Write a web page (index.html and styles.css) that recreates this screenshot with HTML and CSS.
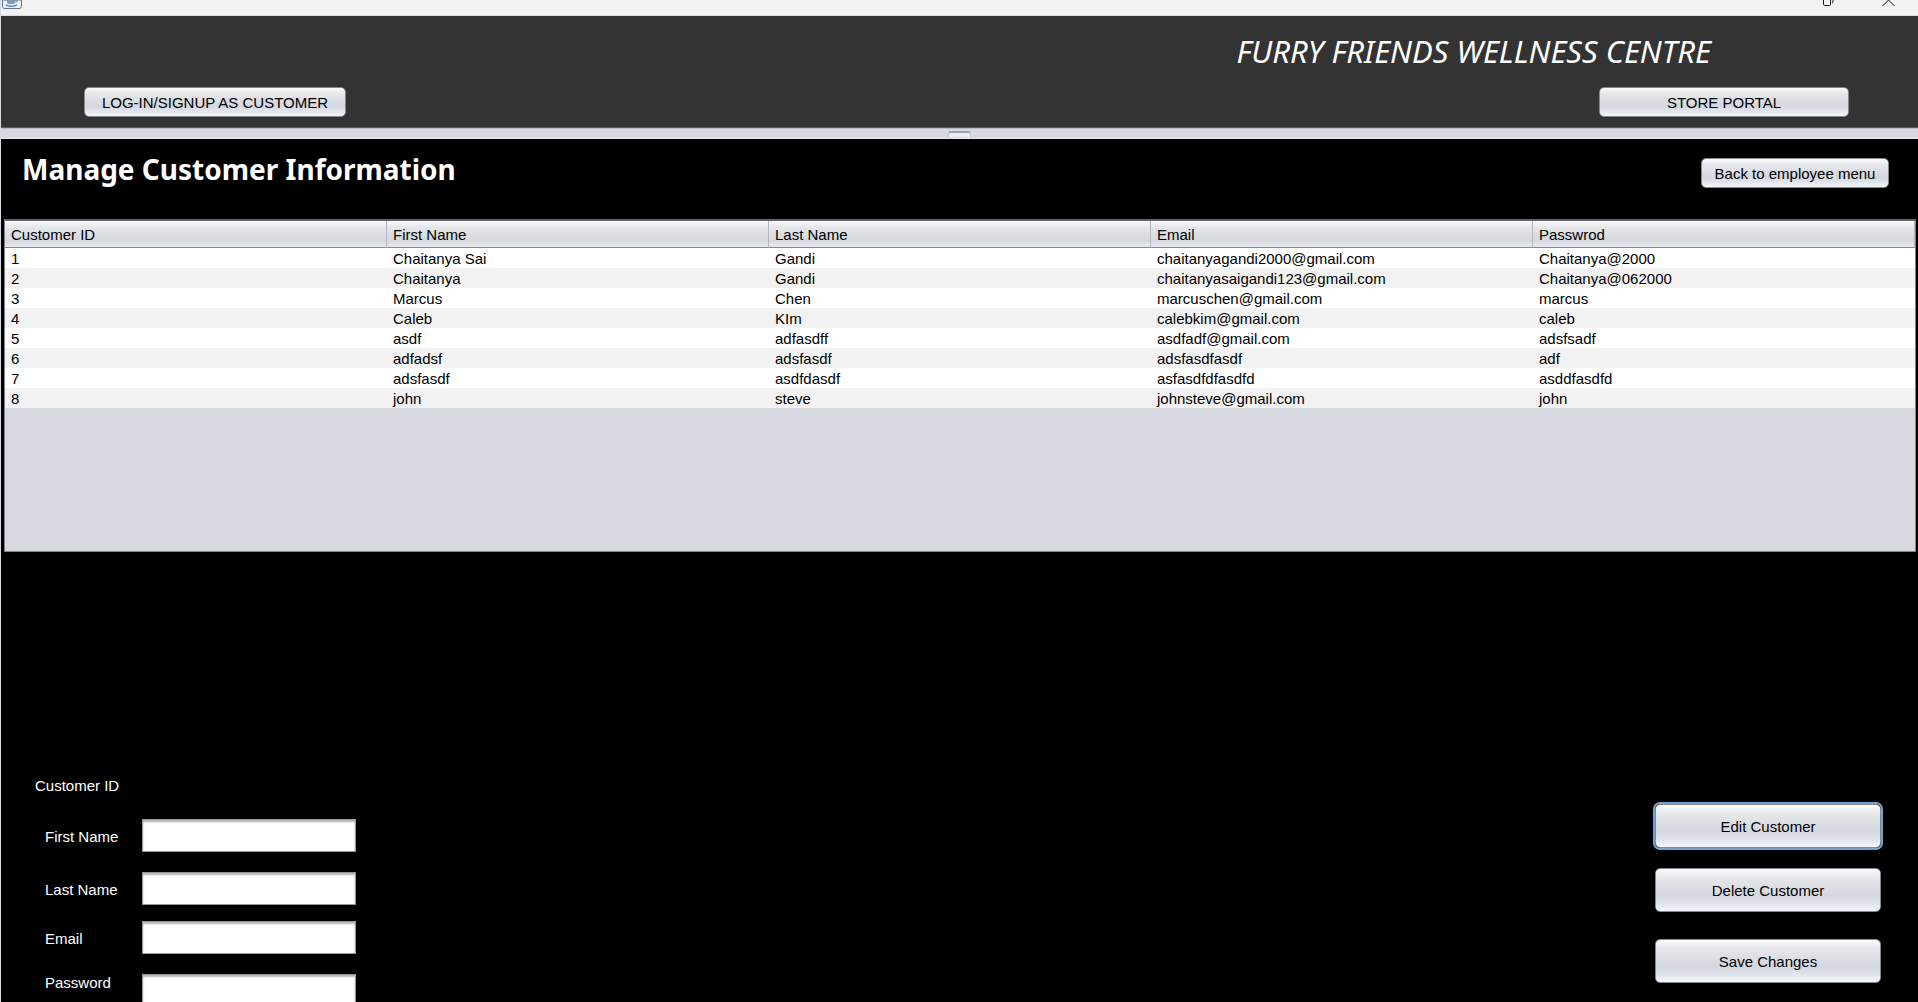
FILE: index.html
```html
<!DOCTYPE html>
<html lang="en">
<head>
<meta charset="utf-8">
<title>Furry Friends Wellness Centre</title>
<link rel="stylesheet" href="styles.css">
</head>
<body>
<div class="window">
  <div class="titlebar">
    <svg class="app-icon" width="20" height="9" viewBox="0 0 20 9" aria-hidden="true">
      <path d="M.5 0v6.500q0 2 2 2h15q2 0 2-2V0z" fill="#eef0f2" stroke="#5c7890"/>
      <path d="M5 0h8v1.500Q13 4 10.500 4h-3Q5 4 5 1.500z" fill="#7f9bb3"/>
      <path d="M13 .5h2v1.500h-2" fill="none" stroke="#7f9bb3"/>
      <path d="M4 5q5.500 2.500 11 0" fill="none" stroke="#6a8aa6" stroke-width="1.500"/>
    </svg>
    <div class="window-controls">
      <svg width="12" height="7" viewBox="0 0 12 7" aria-hidden="true"><path d="M.5 0v4.500q0 1 1 1h5q1 0 1-1V0M10 0v1.500q0 1-1 1.500" fill="none" stroke="#111"/></svg>
      <svg width="13" height="7" viewBox="0 0 13 7" aria-hidden="true"><path d="M.5 6 6.500 0l6 6" fill="none" stroke="#111"/></svg>
    </div>
  </div>
  <header class="banner">
    <p class="brand">FURRY FRIENDS WELLNESS CENTRE</p>
    <div class="portals">
      <button class="btn login" type="button">LOG-IN/SIGNUP AS CUSTOMER</button>
      <button class="btn store" type="button">STORE PORTAL</button>
    </div>
  </header>
  <div class="divider"><span class="grip"></span></div>
  <main class="content">
    <div class="heading">
      <h1>Manage Customer Information</h1>
      <button class="btn back" type="button">Back to employee menu</button>
    </div>
    <div class="table-pane">
      <table>
        <thead>
          <tr><th>Customer ID</th><th>First Name</th><th>Last Name</th><th>Email</th><th>Passwrod</th></tr>
        </thead>
        <tbody>
          <tr><td>1</td><td>Chaitanya Sai</td><td>Gandi</td><td>chaitanyagandi2000@gmail.com</td><td>Chaitanya@2000</td></tr>
          <tr><td>2</td><td>Chaitanya</td><td>Gandi</td><td>chaitanyasaigandi123@gmail.com</td><td>Chaitanya@062000</td></tr>
          <tr><td>3</td><td>Marcus</td><td>Chen</td><td>marcuschen@gmail.com</td><td>marcus</td></tr>
          <tr><td>4</td><td>Caleb</td><td>KIm</td><td>calebkim@gmail.com</td><td>caleb</td></tr>
          <tr><td>5</td><td>asdf</td><td>adfasdff</td><td>asdfadf@gmail.com</td><td>adsfsadf</td></tr>
          <tr><td>6</td><td>adfadsf</td><td>adsfasdf</td><td>adsfasdfasdf</td><td>adf</td></tr>
          <tr><td>7</td><td>adsfasdf</td><td>asdfdasdf</td><td>asfasdfdfasdfd</td><td>asddfasdfd</td></tr>
          <tr><td>8</td><td>john</td><td>steve</td><td>johnsteve@gmail.com</td><td>john</td></tr>
        </tbody>
      </table>
    </div>
    <form class="editor">
      <div class="fields">
        <p class="record-id">Customer ID</p>
        <div class="group">
          <div class="field"><label for="first">First Name</label><input id="first" type="text"></div>
          <div class="field"><label for="last">Last Name</label><input id="last" type="text"></div>
        </div>
        <div class="group">
          <div class="field"><label for="email">Email</label><input id="email" type="text"></div>
          <div class="field field-top"><label for="password">Password</label><input id="password" type="text"></div>
        </div>
      </div>
      <div class="actions">
        <div class="group">
          <button class="btn focused" type="button">Edit Customer</button>
          <button class="btn" type="button">Delete Customer</button>
        </div>
        <button class="btn" type="button">Save Changes</button>
      </div>
    </form>
  </main>
</div>
</body>
</html>
```
FILE: styles.css
```css
* { box-sizing: border-box; }

body {
  margin: 0;
  background: #000;
  color: #000;
  font: 15px/18px "Liberation Sans", Arial, sans-serif;
}

.window {
  display: flex;
  flex-direction: column;
  height: 100vh;
  overflow: hidden;
  border-left: 1px solid #d6d9df;
}

.titlebar {
  display: flex;
  flex: none;
  justify-content: space-between;
  align-items: flex-start;
  height: 16px;
  margin-left: -1px;
  padding: 0 23px 0 2px;
  background: #f2f2f2;
  border-bottom: 1px solid #d6dde3;
}

.titlebar svg { display: block; }

.window-controls { display: flex; gap: 47px; }

.banner {
  flex: none;
  padding: 15px 69px 10px 83px;
  background: #333;
  border-bottom: 1px solid #5c5660;
}

.brand {
  margin: 0 138px 16px 0;
  color: #fff;
  font: italic 31px/40px "Noto Sans", "Open Sans", sans-serif;
  text-align: right;
}

.portals { display: flex; justify-content: space-between; }

.btn {
  height: 30px;
  padding: 2px 8px 0;
  border: 1px solid #85888f;
  border-radius: 5px;
  background: linear-gradient(#fbfbfc, #e6e7ea 20%, #d4d7df 65%, #dfe2ea 80%, #f5f7fd);
  color: #000;
  font: inherit;
}

.login { width: 262px; }
.store { width: 250px; }
.back { width: 188px; }

.divider {
  display: flex;
  flex: none;
  justify-content: center;
  height: 11px;
  padding-top: 2px;
  background: #d6d9df;
  border-top: 1px solid #b9bbc3;
  border-bottom: 1px solid #e9ebef;
}

.grip {
  width: 23px;
  height: 6px;
  border: 1px solid #c3c6cd;
  border-top: 2px solid #9da1aa;
  border-bottom: 0;
  border-radius: 3px 3px 0 0;
  background: #eceef2;
}

.content { flex: none; }

.heading {
  display: flex;
  justify-content: space-between;
  align-items: flex-start;
  padding: 10px 29px 30px 21px;
}

.heading .btn { margin-top: 9px; }

h1 {
  margin: 0;
  color: #fff;
  font: bold 28px/40px "Noto Sans", "Open Sans", sans-serif;
}

.table-pane {
  height: 333px;
  margin: 0 2px 0 3px;
  border: 1px solid #7e818b;
  border-top: 2px solid #65666e;
  background: #d6d9df;
}

table {
  width: 100%;
  table-layout: fixed;
  border-collapse: separate;
  border-spacing: 0;
}

th, td {
  padding: 2px 6px 0;
  font-weight: normal;
  text-align: left;
}

th {
  height: 27px;
  padding-top: 1px;
  border-right: 1px solid #b4b6bd;
  border-bottom: 1px solid #85888f;
  background: linear-gradient(#f8f8fa, #e2e4e8 30%, #d5d8dd 75%, #e6e9f1);
}

td { height: 20px; }

tbody tr { background: #fff; }
tbody tr:nth-child(even) { background: #f2f2f2; }

.editor {
  display: flex;
  justify-content: space-between;
  align-items: flex-start;
  margin-top: 225px;
  padding: 0 37px 0 34px;
}

.fields { color: #fff; }

.record-id { margin: 0 0 24px; }

.group {
  display: flex;
  flex-direction: column;
  gap: 20px;
  margin-bottom: 16px;
}

.field {
  display: flex;
  align-items: center;
  padding-left: 10px;
}

.field label { width: 97px; padding-top: 3px; }

.field-top { align-items: flex-start; }
.field-top label { padding-top: 0; }

.field input {
  width: 214px;
  height: 33px;
  padding: 0 6px;
  border: 1px solid #96979b;
  border-radius: 0;
  background: #fff;
  box-shadow: inset 0 2px 2px #b4b4b8;
  color: #000;
  font: inherit;
}

.actions {
  display: flex;
  flex-direction: column;
  width: 226px;
  padding-top: 27px;
}

.actions .group { margin-bottom: 27px; }

.actions .btn { width: 100%; height: 44px; }

.focused { box-shadow: 0 0 0 2px #73a4d1; }
```
